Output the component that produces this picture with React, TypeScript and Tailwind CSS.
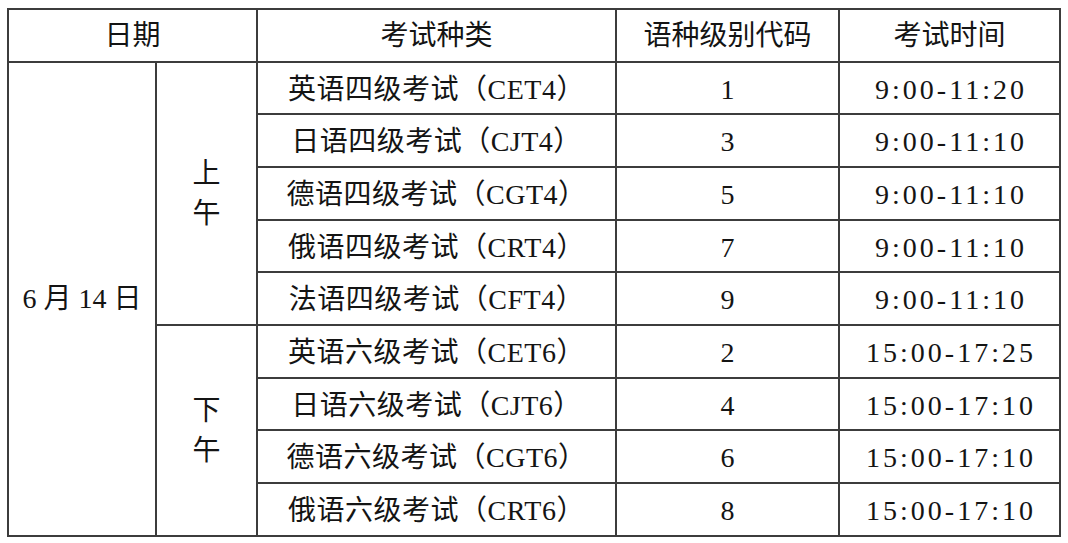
const rows = [
  { name: "英语四级考试（CET4）", code: "1", time: "9:00-11:20" },
  { name: "日语四级考试（CJT4）", code: "3", time: "9:00-11:10" },
  { name: "德语四级考试（CGT4）", code: "5", time: "9:00-11:10" },
  { name: "俄语四级考试（CRT4）", code: "7", time: "9:00-11:10" },
  { name: "法语四级考试（CFT4）", code: "9", time: "9:00-11:10" },
  { name: "英语六级考试（CET6）", code: "2", time: "15:00-17:25" },
  { name: "日语六级考试（CJT6）", code: "4", time: "15:00-17:10" },
  { name: "德语六级考试（CGT6）", code: "6", time: "15:00-17:10" },
  { name: "俄语六级考试（CRT6）", code: "8", time: "15:00-17:10" },
];

const heights = ["h-[52px]", "h-[53px]", "h-[53px]", "h-[52px]", "h-[53px]", "h-[53px]", "h-[52px]", "h-[53px]", "h-[53px]"];

const cell = "border-2 border-[#3c3c3c] p-0 text-center align-middle";

export default function App() {
  return (
    <div
      className="min-h-screen bg-white pl-[7px] pt-[8px] text-[28px] leading-none text-[#141414]"
      style={{ fontFamily: '"Liberation Serif", "Noto Sans CJK SC", serif' }}
    >
      <table className="table-fixed border-collapse">
        <colgroup>
          <col className="w-[148px]" />
          <col className="w-[101px]" />
          <col className="w-[359px]" />
          <col className="w-[223px]" />
          <col className="w-[221px]" />
        </colgroup>
        <thead>
          <tr className="h-[53px]">
            <th colSpan={2} className={`${cell} font-normal`}>日期</th>
            <th className={`${cell} font-normal`}>考试种类</th>
            <th className={`${cell} font-normal`}>语种级别代码</th>
            <th className={`${cell} font-normal`}>考试时间</th>
          </tr>
        </thead>
        <tbody>
          {rows.map((r, i) => (
            <tr key={r.name} className={heights[i]}>
              {i === 0 && (
                <td rowSpan={9} className={cell}>
                  6 月 14 日
                </td>
              )}
              {i === 0 && (
                <td rowSpan={5} className={cell}>
                  <div className="flex flex-col items-center gap-[12px]">
                    <span>上</span>
                    <span>午</span>
                  </div>
                </td>
              )}
              {i === 5 && (
                <td rowSpan={4} className={cell}>
                  <div className="flex flex-col items-center gap-[12px]">
                    <span>下</span>
                    <span>午</span>
                  </div>
                </td>
              )}
              <td className={`${cell} pt-[3px]`}>
                <span className="tracking-[0.5px]">{r.name}</span>
              </td>
              <td className={`${cell} pt-[3px]`}>{r.code}</td>
              <td className={`${cell} pt-[3px]`}>
                <span className="pl-[3px] tracking-[3px]">{r.time}</span>
              </td>
            </tr>
          ))}
        </tbody>
      </table>
    </div>
  );
}
